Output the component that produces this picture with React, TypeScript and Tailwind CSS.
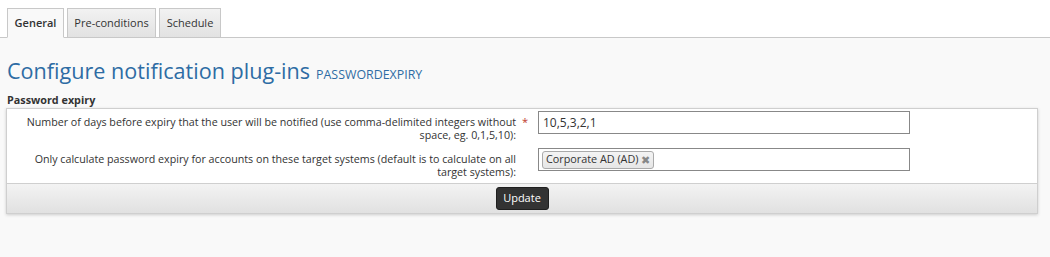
import React from "react";

const tabs = [
  { label: "General", w: "w-[57px]" },
  { label: "Pre-conditions", w: "w-[89px]" },
  { label: "Schedule", w: "w-[62px]" },
];

const App = () => {
  return (
    <div className="min-h-[257px] bg-[#f9f9f9] font-['Open_Sans',sans-serif] text-[#333]">
      {/* Tabs */}
      <div className="flex gap-[3px] bg-white pl-[7px] pt-[8px] border-b border-[#c8c8c8]">
        {tabs.map((t, i) => (
          <div
            key={t.label}
            className={`${t.w} -mb-px h-[30px] flex items-center justify-center text-[11px] border border-[#c8c8c8] ${
              i === 0
                ? "bg-[#f9f9f9] border-b-[#f9f9f9] font-semibold"
                : "bg-gradient-to-b from-[#f2f2f2] to-[#e2e2e2]"
            }`}
          >
            {t.label}
          </div>
        ))}
      </div>

      <div className="pl-[6px] pr-[12px]">
        <h1 className="pl-[1px] mt-[19px] text-[21.6px] leading-[28px] text-[#2e6ca4] flex items-baseline gap-[6px]">
          Configure notification plug-ins
          <span className="text-[12.4px]">PASSWORDEXPIRY</span>
        </h1>
        <div className="pl-[1px] mt-[4px] text-[10.8px] font-bold leading-[14px]">Password expiry</div>

        <div className="mt-[1px] border border-[#cfcfcf] bg-white shadow-[0_1px_3px_rgba(0,0,0,0.18)]">
          <div className="pt-[2px] pb-[4px]">
            <div className="flex items-start">
              <div className="w-[509px] shrink-0 text-right text-[10.7px] leading-[13px] pt-[5px] whitespace-nowrap">
                Number of days before expiry that the user will be notified (use comma-delimited integers without
                <br />
                space, eg. 0,1,5,10):
              </div>
              <div className="w-[22px] pl-[6px] text-[#c0392b] text-[11px] leading-[13px] pt-[4px]">*</div>
              <div className="w-[372px] h-[23px] border border-[#888] bg-white px-[4px] flex items-center text-[12px]">
                10,5,3,2,1
              </div>
            </div>
            <div className="flex items-start mt-[6px]">
              <div className="w-[509px] shrink-0 text-right text-[10.7px] leading-[13px] pt-[5px] whitespace-nowrap">
                Only calculate password expiry for accounts on these target systems (default is to calculate on all
                <br />
                target systems):
              </div>
              <div className="w-[22px]" />
              <div className="w-[372px] h-[23px] border border-[#888] bg-white px-[3px] flex items-center">
                <span className="flex items-center gap-[3px] border border-[#aaa] rounded-[3px] bg-gradient-to-b from-[#f4f4f4] to-[#e6e6e6] px-[3px] h-[18px] text-[10.8px] leading-none">
                  Corporate AD (AD)
                  <span className="text-[#888] text-[11px]">✖</span>
                </span>
              </div>
            </div>
          </div>
          <div className="border-t border-[#cfcfcf] h-[30px] bg-gradient-to-b from-[#f3f3f3] to-[#e1e1e1] flex justify-center items-center">
            <button className="h-[23px] w-[53px] bg-[#333] border border-[#1f1f1f] rounded-[3px] text-white text-[11px]">
              Update
            </button>
          </div>
        </div>
      </div>
    </div>
  );
};

export default App;
